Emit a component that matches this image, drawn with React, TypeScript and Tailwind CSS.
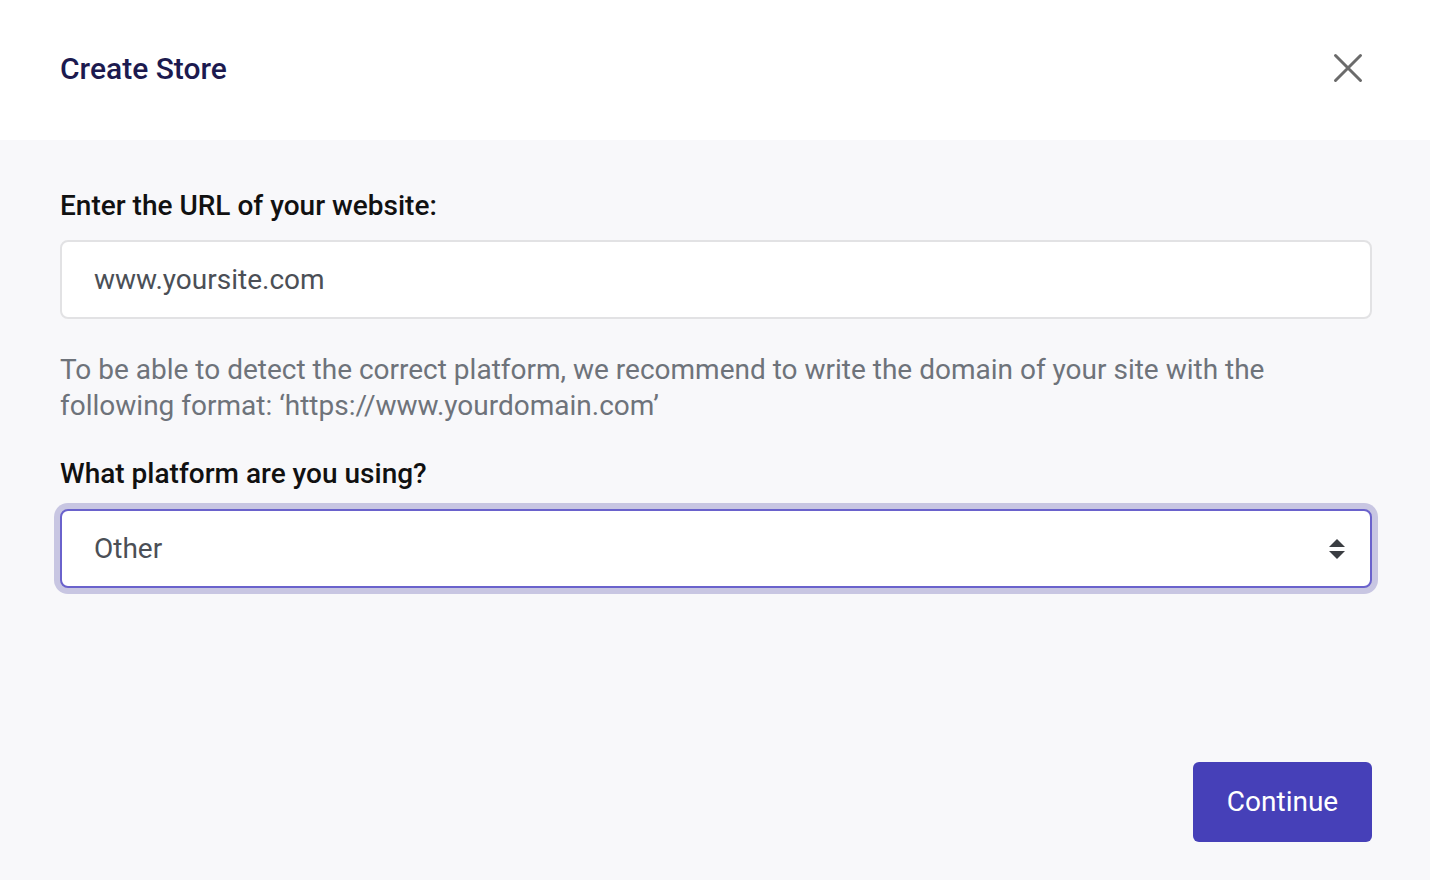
import React from "react";

export default function App() {
  return (
    <div className="w-[1430px] h-[880px] flex flex-col bg-[#f8f8fa]" style={{ fontFamily: "Roboto, 'Liberation Sans', sans-serif" }}>
      <div className="h-[140px] bg-white flex items-center justify-between pl-[60px] pr-[67px] pb-[4px] shrink-0">
        <h1 className="text-[30px] font-medium text-[#1c1a4f]">Create Store</h1>
        <svg width="30" height="30" viewBox="0 0 30 30" className="text-[#6b6b6b]">
          <path d="M2.5 2.5 L27.5 27.5 M27.5 2.5 L2.5 27.5" stroke="currentColor" strokeWidth="3" strokeLinecap="round" />
        </svg>
      </div>
      <div className="flex-1 flex flex-col pl-[60px] pr-[58px] pt-[50px] pb-[38px]">
        <label className="text-[28px] font-medium text-[#111111] leading-[32px]">Enter the URL of your website:</label>
        <div className="mt-[18px] h-[79px] bg-white border-2 border-[#e2e2e4] rounded-[8px] flex items-center pl-[32px]">
          <span className="text-[28px] text-[#4b4f56]">www.yoursite.com</span>
        </div>
        <p className="mt-[33px] text-[28px] leading-[36px] text-[#6e737a] pr-[80px]">
          To be able to detect the correct platform, we recommend to write the domain of your site with the following format: ‘https://www.yourdomain.com’
        </p>
        <label className="mt-[34px] text-[28px] font-medium text-[#111111] leading-[32px]">What platform are you using?</label>
        <div className="mt-[19px] h-[79px] bg-white border-2 border-[#6a62cc] rounded-[8px] ring-[6px] ring-[#c8c6e2] flex items-center justify-between pl-[32px] pr-[24px]">
          <span className="text-[28px] text-[#4b4f56]">Other</span>
          <svg width="18" height="22" viewBox="0 0 18 22">
            <path d="M9 1 L17 9 L1 9 Z" fill="#3a3d42" />
            <path d="M9 21 L17 13 L1 13 Z" fill="#3a3d42" />
          </svg>
        </div>
        <div className="flex-1" />
        <div className="flex justify-end">
          <button className="w-[179px] h-[80px] bg-[#4640b8] text-white rounded-[6px] text-[28px]">Continue</button>
        </div>
      </div>
    </div>
  );
}
